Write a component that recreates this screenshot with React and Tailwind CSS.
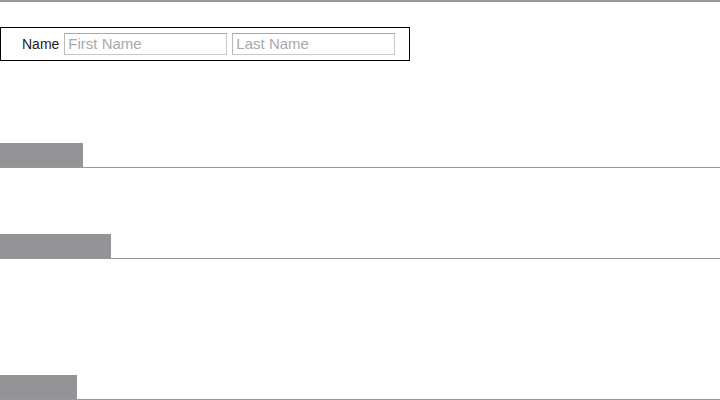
export default function App() {
  const font = { fontFamily: '"Liberation Sans", Arial, sans-serif' };
  return (
    <div className="w-[720px] h-[400px] bg-white overflow-hidden" style={font}>
      <div className="h-[2px] bg-[#9a9a9a]" />
      <div className="mt-[25px] w-[410px] h-[34px] border border-black flex items-center pl-[21px]">
        <span className="text-[14px] text-[#222] leading-none mr-[5px]">Name</span>
        <input
          className="w-[163px] h-[22px] border border-[#c9c9c9] border-t-[#a8a8a8] border-l-[#b8b8b8] px-[3px] text-[15px] text-[#333] placeholder:text-[#a9a9a9] outline-none"
          placeholder="First Name"
          style={font}
        />
        <input
          className="ml-[5px] w-[163px] h-[22px] border border-[#c9c9c9] border-t-[#a8a8a8] border-l-[#b8b8b8] px-[3px] text-[15px] text-[#333] placeholder:text-[#a9a9a9] outline-none"
          placeholder="Last Name"
          style={font}
        />
      </div>
      <div className="mt-[82px] border-b border-[#999]">
        <div className="w-[83px] h-[24px] bg-[#939498]" />
      </div>
      <div className="mt-[66px] border-b border-[#999]">
        <div className="w-[111px] h-[24px] bg-[#939498]" />
      </div>
      <div className="mt-[116px] border-b border-[#999]">
        <div className="w-[77px] h-[24px] bg-[#939498]" />
      </div>
    </div>
  );
}
